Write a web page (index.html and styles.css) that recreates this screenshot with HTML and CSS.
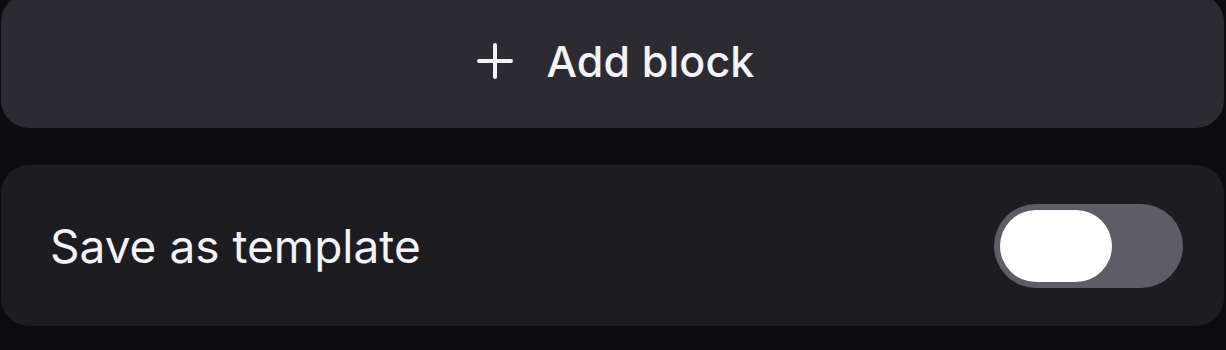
FILE: index.html
```html
<!DOCTYPE html>
<html>
<head>
<meta charset="utf-8">
<link rel="stylesheet" href="styles.css">
</head>
<body>
<div class="page">
  <button class="add-block">
    <svg class="plus" width="36" height="36" viewBox="0 0 36 36"><path d="M18 2v32M2 18h32" stroke="#f2f2f7" stroke-width="4" stroke-linecap="round" fill="none"/></svg>
    <span class="add-label">Add block</span>
  </button>
  <div class="row">
    <span class="row-label">Save as template</span>
    <div class="toggle"><div class="knob"></div></div>
  </div>
</div>
</body>
</html>
```
FILE: styles.css
```css
html, body {
  margin: 0;
  padding: 0;
  background: #0c0c0f;
  height: 100%;
  overflow: hidden;
}
.page {
  display: flex;
  flex-direction: column;
  gap: 37px;
  padding: 0 2px 0 1px;
  font-family: Inter, "Liberation Sans", sans-serif;
  color: #f2f2f7;
}
.add-block {
  margin-top: -6px;
  height: 134px;
  border: none;
  border-radius: 28px;
  background: #2c2b31;
  display: flex;
  align-items: center;
  justify-content: center;
  gap: 34px;
  font-family: inherit;
  color: inherit;
  padding: 0 0 0 6px;
}
.plus { display: block; }
.add-label {
  font-size: 43px;
  font-weight: 500;
  letter-spacing: 0.1px;
}
.row {
  height: 161px;
  border-radius: 28px;
  background: #1d1c21;
  display: flex;
  align-items: center;
  justify-content: space-between;
  padding: 0 41px 0 49px;
}
.row-label {
  font-size: 46px;
  font-weight: 400;
}
.toggle {
  width: 189px;
  height: 84px;
  border-radius: 42px;
  background: #5e5d65;
  display: flex;
  align-items: center;
  padding-left: 6px;
  box-sizing: border-box;
}
.knob {
  width: 112px;
  height: 72px;
  border-radius: 36px;
  background: #ffffff;
}
```
